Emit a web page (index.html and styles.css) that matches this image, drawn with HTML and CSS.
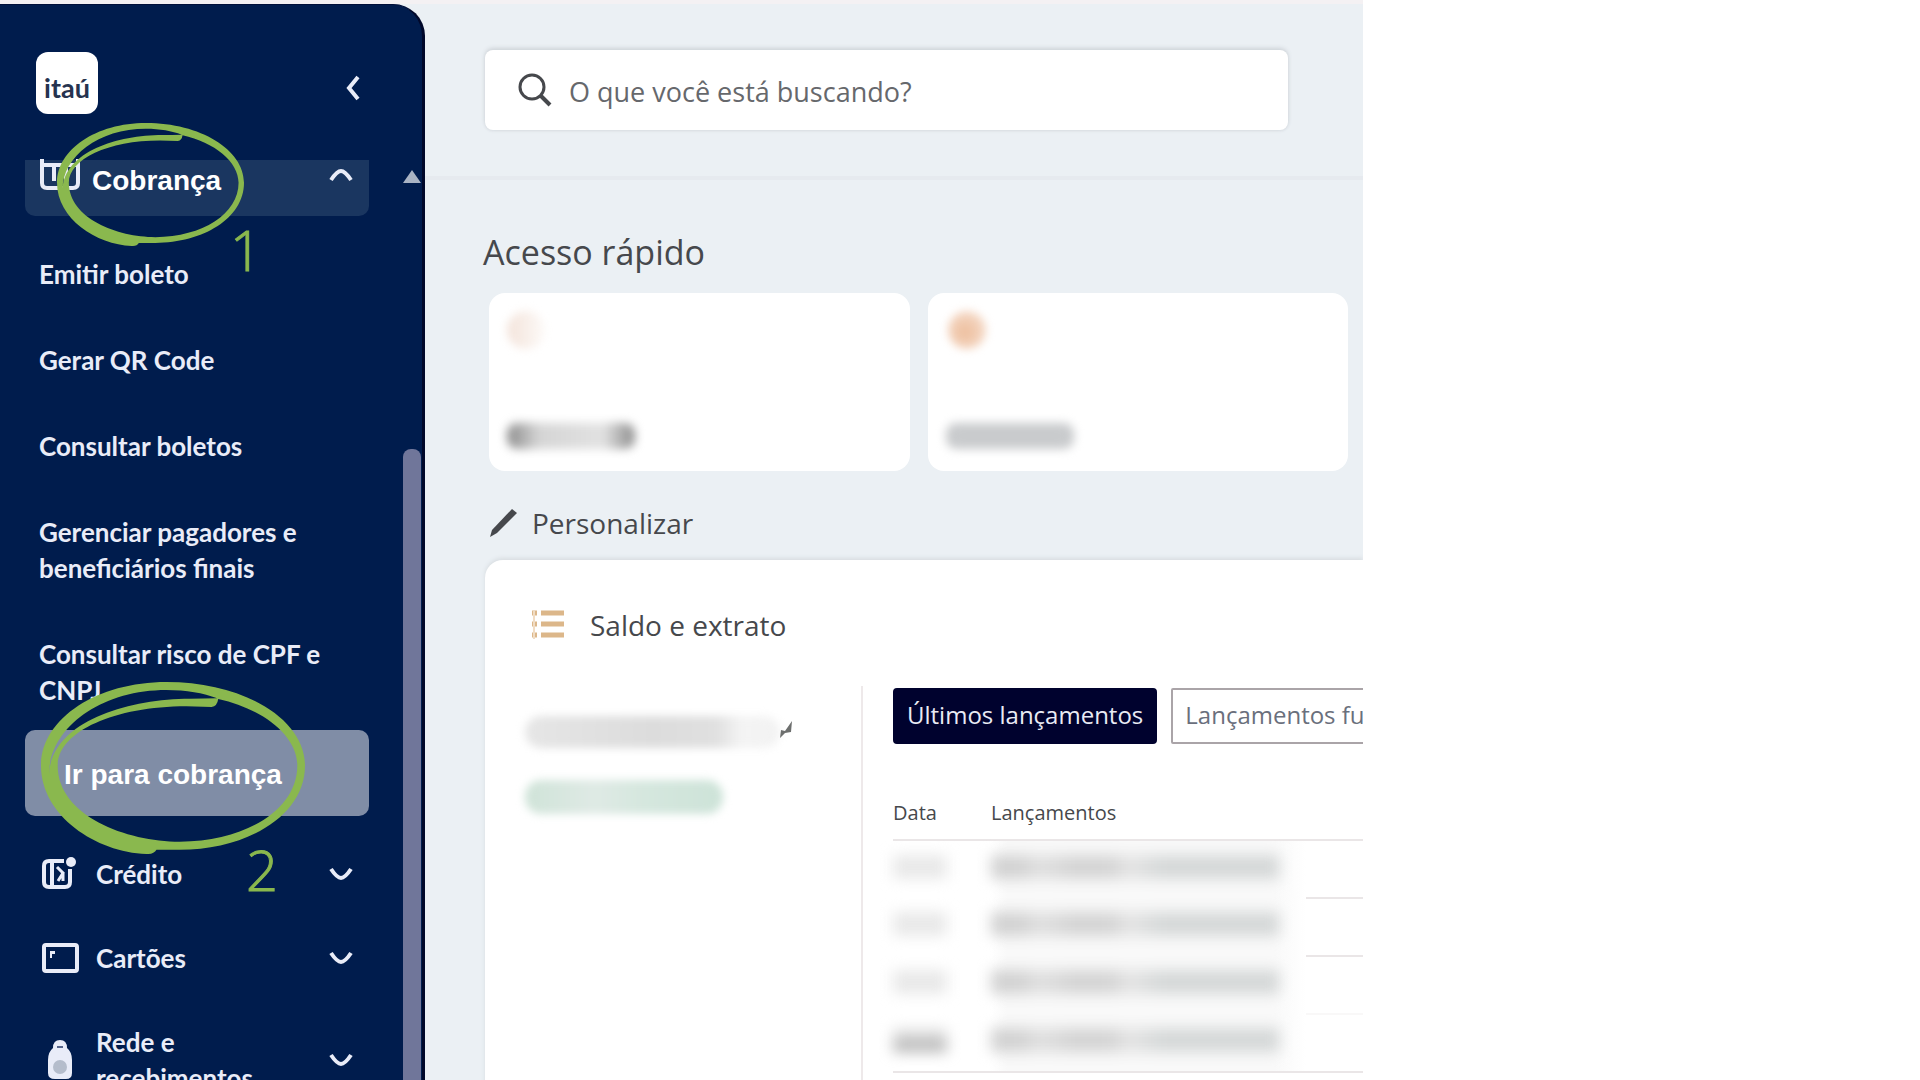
FILE: index.html
```
<!DOCTYPE html>
<html lang="pt-BR">
<head>
  <meta charset="UTF-8"/>
  <meta name="viewport" content="width=device-width,initial-scale=1"/>
  <title>Itaú Empresas</title>
  <link rel="stylesheet" href="styles.css">
</head>
<body>
  <svg class="defs" aria-hidden="true">
    <symbol id="scribble" viewBox="124 189 791 516" preserveAspectRatio="none">
      <path fill-rule="evenodd" d="M440 705C290 700 124 590 124 440C124 300 290 189 500 189C730 189 915 300 915 440C915 590 740 692 540 692L470 692Q462 706 440 705Z
        M148 465C148 330 300 213 500 213C560 213 610 222 652 238Q610 239 570 239C380 239 155 310 148 465Z
        M174 440C174 340 340 262 560 262L635 264Q652 262 655 240C790 270 892 350 892 440C892 570 740 667 540 668C380 668 174 590 174 440Z"/>
    </symbol>
    <symbol id="chevron" viewBox="0 0 24 16">
      <path d="M2 3Q8 12 12 12Q16 12 22 3" fill="none" stroke="currentColor" stroke-width="4"/>
    </symbol>
  </svg>

  <div class="app">
    <aside class="sidebar">
      <div class="sidebar-head">
        <a href="#" class="logo">itaú</a>
        <button class="icon-btn" aria-label="Recolher menu">
          <svg width="16" height="26" viewBox="0 0 16 26"><path d="M13 2L4 13L13 24" fill="none" stroke="currentColor" stroke-width="4"/></svg>
        </button>
      </div>

      <nav class="menu">
        <div class="menu-group">
          <button class="menu-row current">
            <svg class="menu-icon" width="40" height="32" viewBox="0 0 40 32"><path d="M2 0V24Q2 29 7 29H33Q38 29 38 24V0M2 6H38M14 6V22M26 6V22" fill="none" stroke="currentColor" stroke-width="4"/></svg>
            <span>Cobrança</span>
            <svg class="chevron up" width="24" height="16"><use href="#chevron"/></svg>
          </button>
          <svg class="mark mark-one"><use href="#scribble"/></svg>
          <span class="step step-one">1</span>
        </div>

        <ul class="submenu">
          <li><a href="#">Emitir boleto</a></li>
          <li><a href="#">Gerar QR Code</a></li>
          <li><a href="#">Consultar boletos</a></li>
          <li><a href="#">Gerenciar pagadores e beneficiários finais</a></li>
          <li><a href="#">Consultar risco de CPF e CNPJ</a></li>
        </ul>

        <div class="menu-group go">
          <a href="#" class="go-link">Ir para cobrança</a>
          <svg class="mark mark-two"><use href="#scribble"/></svg>
          <span class="step step-two">2</span>
        </div>

        <div class="menu-list">
          <button class="menu-row">
            <svg class="menu-icon" width="40" height="34" viewBox="0 0 40 34"><path d="M24 4H9Q4 4 4 9V25Q4 30 9 30H25Q30 30 30 25V12M12 4V30" fill="none" stroke="currentColor" stroke-width="4"/><path d="M17 10L23 16L18 24M23 16V24" fill="none" stroke="currentColor" stroke-width="3"/><circle cx="31" cy="5" r="5" fill="currentColor"/></svg>
            <span>Crédito</span>
            <svg class="chevron" width="24" height="16"><use href="#chevron"/></svg>
          </button>
          <button class="menu-row">
            <svg class="menu-icon" width="40" height="34" viewBox="0 0 40 34"><rect x="4" y="4" width="33" height="26" rx="2" fill="none" stroke="currentColor" stroke-width="4"/><path d="M10 10H15V13H12V17H10Z" fill="currentColor"/></svg>
            <span>Cartões</span>
            <svg class="chevron" width="24" height="16"><use href="#chevron"/></svg>
          </button>
          <button class="menu-row">
            <svg class="menu-icon" width="40" height="42" viewBox="0 0 40 42"><path d="M13 9Q13 1 20 1Q27 1 27 9Q32 13 32 21V34Q32 40 26 40H15Q8 40 8 34V21Q8 13 13 9Z" fill="currentColor"/><path d="M17 8H23" stroke="#56648a" stroke-width="2"/><circle cx="20" cy="28" r="7" fill="#b5bdcc"/></svg>
            <span>Rede e recebimentos</span>
            <svg class="chevron" width="24" height="16"><use href="#chevron"/></svg>
          </button>
        </div>
      </nav>

      <div class="scrollbar">
        <span class="scroll-arrow"></span>
        <span class="scroll-thumb"></span>
      </div>
    </aside>

    <main class="content">
      <header class="topbar">
        <label class="search">
          <svg width="36" height="36" viewBox="0 0 36 36"><circle cx="15" cy="15" r="12" fill="none" stroke="currentColor" stroke-width="3"/><path d="M24 24L33 33" stroke="currentColor" stroke-width="4"/></svg>
          <input type="search" placeholder="O que você está buscando?" aria-label="Buscar">
        </label>
      </header>

      <section class="quick">
        <h2>Acesso rápido</h2>
        <div class="cards">
          <button class="card" aria-label="Atalho 1">
            <span class="dot pale"></span>
            <span class="smudge fade-middle"></span>
          </button>
          <button class="card" aria-label="Atalho 2">
            <span class="dot"></span>
            <span class="smudge"></span>
          </button>
        </div>
        <button class="customize">
          <svg width="30" height="32" viewBox="0 0 30 32"><path d="M2 30L4 23L24 2L29 6L9 26Z" fill="currentColor"/></svg>
          Personalizar
        </button>
      </section>

      <section class="panel">
        <h3>
          <svg width="32" height="32" viewBox="0 0 32 32"><path d="M0 4H5M9 4H32M0 15H5M9 15H32M0 26H5M9 26H32" stroke="#dcb78a" stroke-width="5"/><path d="M2 1V30" stroke="#f0dcc4" stroke-width="2"/></svg>
          Saldo e extrato
        </h3>
        <div class="panel-body">
          <div class="balance">
            <span class="label-blur"></span>
            <span class="value-blur"></span>
            <svg class="leftover" width="14" height="20" viewBox="0 0 14 20"><path d="M1 18L2 10L6 11L13 1L12 12L6 13Z" fill="#6d6f6e"/></svg>
          </div>
          <div class="entries">
            <div class="tabs">
              <button class="tab active">Últimos lançamentos</button>
              <button class="tab">Lançamentos futuros</button>
            </div>
            <table>
              <thead>
                <tr><th>Data</th><th>Lançamentos</th><th></th></tr>
              </thead>
              <tbody>
                <tr><td><span class="date"></span></td><td><span class="entry"></span></td><td></td></tr>
                <tr><td><span class="date"></span></td><td><span class="entry"></span></td><td></td></tr>
                <tr class="faint"><td><span class="date"></span></td><td><span class="entry"></span></td><td></td></tr>
                <tr><td><span class="date dark"></span></td><td><span class="entry"></span></td><td></td></tr>
              </tbody>
            </table>
          </div>
        </div>
      </section>
    </main>
  </div>
</body>
</html>
```

FILE: styles.css
```
:root {
  --navy: #001c4d;
  --navy-dark: #00022e;
  --page: #ebf0f4;
  --ink: #46484c;
  --green: #8ab84e;
}
*, *::before, *::after { margin:0; padding:0; box-sizing:border-box; }
body {
  font-family: 'Open Sans', 'Noto Sans', sans-serif;
  background: #fff;
  color: var(--ink);
  overflow: hidden;
}
button { font: inherit; color: inherit; background: none; border: none; cursor: pointer; text-align: left; }
a { color: inherit; text-decoration: none; }
.defs { position: absolute; width: 0; height: 0; }

.app {
  display: flex;
  width: 71vw;
  height: 100vh;
  overflow: hidden;
  background: var(--page);
  border-top: 4px solid #f4f1f3;
}

/* Sidebar */
.sidebar {
  position: relative;
  flex: 0 0 425px;
  background: var(--navy);
  color: #e9ecf8;
  border-top: 1px solid #00103a;
  border-right: 3px solid #00082a;
  border-top-right-radius: 32px;
  overflow: hidden;
}
.sidebar-head {
  display: flex;
  align-items: center;
  justify-content: space-between;
  height: 155px;
  padding: 0 61px 0 36px;
}
.logo {
  display: flex;
  align-items: center;
  justify-content: center;
  width: 62px;
  height: 62px;
  background: #fff;
  border-radius: 12px;
  color: #26334f;
  font: bold 27px/1 'Lato', sans-serif;
  padding-top: 10px;
}
.icon-btn { display: flex; padding-top: 10px; }

.menu { font: bold 26px/36px 'Lato', sans-serif; }
.menu-group { position: relative; margin: 0 53px 0 25px; }
.menu-row {
  display: flex;
  align-items: center;
  width: 100%;
  gap: 16px;
}
.menu-row span { flex: 1; max-width: 180px; }
.menu-icon { flex: none; }
.chevron { flex: none; margin-left: auto; }
.chevron.up { transform: rotate(180deg); }
.current {
  height: 56px;
  padding: 0 16px 26px 15px;
  gap: 12px;
  background: #1a3660;
  border-radius: 0 0 10px 10px;
}
.current span, .go-link {
  font: bold 28px/32px 'Liberation Sans', sans-serif;
  color: #fff;
}
.current span { padding-top: 12px; }

.submenu {
  display: flex;
  flex-direction: column;
  gap: 50px;
  list-style: none;
  padding: 40px 90px 0 39px;
}
.go { margin-top: 22px; }
.go-link {
  display: flex;
  align-items: center;
  height: 86px;
  padding: 4px 0 0 39px;
  background: #808da6;
  border-radius: 10px;
}
.menu-list {
  display: flex;
  flex-direction: column;
  gap: 48px;
  padding: 40px 69px 0 40px;
}

/* Hand-drawn marks */
.mark { position: absolute; fill: var(--green); overflow: visible; }
.mark-one { left: 32px; top: -37px; width: 187px; height: 123px; }
.mark-two { left: 16px; top: -48px; width: 264px; height: 172px; }
.step {
  position: absolute;
  color: var(--green);
  font: 300 56px/56px 'Open Sans', sans-serif;
  -webkit-text-stroke: 1px var(--green);
}
.step-one { left: 205px; top: 61px; }
.step-two { left: 221px; top: 111px; }

.scrollbar {
  position: absolute;
  top: 165px; bottom: 0; right: 1px;
  width: 18px;
  display: flex;
  flex-direction: column;
  gap: 266px;
}
.scroll-arrow { border: 9px solid transparent; border-top: 0; border-bottom: 13px solid #a9b3c4; }
.scroll-thumb { flex: 1; background: #70769a; border-radius: 8px 8px 0 0; }

/* Content */
.content { flex: 1; min-width: 0; display: flex; flex-direction: column; }
.topbar {
  padding: 46px 75px 46px 60px;
  border-bottom: 4px solid #e6eaef;
}
.search {
  display: flex;
  align-items: center;
  gap: 16px;
  height: 80px;
  padding: 0 32px;
  background: #fff;
  border-radius: 8px;
  box-shadow: 0 -2px 4px #cfd4d9, 0 1px 3px #d9dee3;
}
.search input {
  flex: 1;
  padding-top: 4px;
  border: none;
  outline: none;
  background: none;
  font: 27px/36px 'Open Sans', sans-serif;
}
.search input::placeholder { color: #66686c; opacity: 1; }

.quick h2 { padding: 50px 0 0 58px; font-size: 34px; line-height: 44px; font-weight: 400; }
.cards {
  display: grid;
  grid-template-columns: 1fr 1fr;
  gap: 18px;
  padding: 19px 15px 0 64px;
}
.card {
  display: flex;
  flex-direction: column;
  justify-content: space-between;
  height: 178px;
  padding: 18px;
  background: #fff;
  border-radius: 16px;
}
.dot {
  width: 38px;
  height: 38px;
  margin-left: 2px;
  border-radius: 50%;
  background: radial-gradient(circle at 45% 55%, #edbd9b, #f8e6db);
  filter: blur(4px);
}
.dot.pale { margin-left: 0; background: linear-gradient(90deg, #f3e3da, #fdfaf8); }
.smudge {
  width: 128px;
  height: 26px;
  margin-bottom: 4px;
  background: #c9cbcd;
  border-radius: 10px;
  filter: blur(5px);
}
.fade-middle { background: linear-gradient(90deg, #8b8b8b, #d5d5d5 25%, #e2e2e2 75%, #8b8b8b); }

.customize {
  display: flex;
  align-items: center;
  gap: 14px;
  padding: 32px 0 0 63px;
  font-size: 28px;
  line-height: 40px;
}

.panel {
  flex: 1;
  margin: 17px 0 0 60px;
  padding-top: 43px;
  background: #fff;
  border-radius: 18px 0 0 0;
  box-shadow: 0 -2px 4px #d8dde1;
}
.panel h3 {
  display: flex;
  align-items: center;
  gap: 26px;
  padding-left: 47px;
  font-size: 28px;
  line-height: 44px;
  font-weight: 400;
}
.panel-body { display: flex; margin-top: 39px; }
.balance {
  position: relative;
  flex: 0 0 378px;
  height: 400px;
  padding: 30px 0 0 40px;
  border-right: 2px solid #eee9ea;
}
.label-blur, .value-blur { display: block; filter: blur(4px); border-radius: 16px; }
.label-blur { width: 255px; height: 32px; background: linear-gradient(90deg, #e6e6e6, #dcdcdc 50%, #e0e0e0 75%, #f4f4f4 85%, #f2f2f2); }
.value-blur { width: 198px; height: 34px; margin-top: 32px; background: linear-gradient(90deg, #cfe3d8, #dfeae5 35%, #d5e7de 60%, #cde3d8); }
.leftover { position: absolute; left: 294px; top: 34px; }

.entries { flex: 1; min-width: 0; padding: 2px 0 0 30px; overflow: hidden; }
.tabs { display: flex; gap: 14px; }
.tab {
  flex: none;
  height: 56px;
  padding: 0 12px 4px;
  border: 2px solid #aaa4a8;
  border-radius: 2px;
  font-size: 24px;
  white-space: nowrap;
  color: #6a6f7c;
}
.tab.active {
  background: var(--navy-dark);
  border-color: var(--navy-dark);
  border-radius: 4px;
  color: #e9ebf5;
}

table { width: 100%; margin-top: 41px; border-collapse: collapse; table-layout: fixed; }
th {
  height: 55px;
  text-align: left;
  font-size: 20px;
  font-weight: 400;
  border-bottom: 2px solid #eae6e7;
}
th:nth-child(1) { width: 98px; }
th:nth-child(2) { width: 315px; }
td { height: 58px; padding-bottom: 6px; }
td:nth-child(2) { background: linear-gradient(90deg, #fff, #f9f9f9 5%, #f9f9f9 90%, #fff); }
td:nth-child(3) { border-bottom: 2px solid #eae6e7; }
.faint td:nth-child(3) { border-color: #f9f8f8; }
tr:last-child td { border-bottom: 2px solid #eae6e7; }
.date, .entry { display: block; height: 24px; filter: blur(7px); }
.date { width: 54px; background: #e9e9e9; }
.date.dark { background: linear-gradient(#eee, #aaa); }
.entry { width: 288px; background: linear-gradient(90deg, #d2d2d2 10%, #e0e0e0 17%, #d3d3d3 30%, #d5d5d5 42%, #e4e4e4 48%, #d5d8d8 60%, #d5d8d8); }
```
